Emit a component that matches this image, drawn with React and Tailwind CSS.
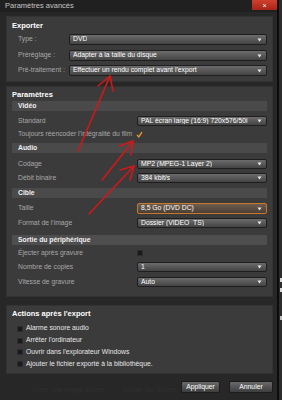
const font = { fontFamily: '"Liberation Sans", Arial, sans-serif' };

function Caret() {
  return (
    <svg width="5" height="4" viewBox="0 0 5 4" className="shrink-0">
      <path d="M0.5 0.5 L4.5 0.5 L2.5 3.5 Z" fill="#e8e8e8" />
    </svg>
  );
}

function Dropdown({ value, active }) {
  return (
    <div
      className={
        active
          ? 'flex-1 h-full flex items-center justify-between pl-[3px] pr-[4px] rounded-[2px] border border-[#c8782c] bg-gradient-to-b from-[#6e5e50] to-[#4a3e34] text-white'
          : 'flex-1 h-full flex items-center justify-between pl-[3px] pr-[4px] rounded-[2px] border border-[#1e1e1e] bg-gradient-to-b from-[#6c6c6c] to-[#444444] text-white'
      }
    >
      <span className="text-[6.8px] leading-none truncate">{value}</span>
      <Caret />
    </div>
  );
}

function Row({ label, labelWidth, className, children }) {
  return (
    <div className={`flex items-center h-[10px] pl-[11px] pr-[5px] ${className}`}>
      <span className="text-[6.8px] leading-none text-[#a8a8a8] shrink-0" style={{ width: labelWidth }}>
        {label}
      </span>
      {children}
    </div>
  );
}

function Band({ label, className }) {
  return (
    <div className={`mx-[5px] h-[10px] bg-[#4a4a4a] pl-[6px] flex items-center ${className}`}>
      <span className="text-[6.8px] leading-none font-bold text-[#f0f0f0]">{label}</span>
    </div>
  );
}

function Box() {
  return <span className="w-[6px] h-[6px] bg-[#1a1a1a] border border-[#2e2e2e] shrink-0" />;
}

function Check({ label }) {
  return (
    <div className="flex items-center h-[11.7px] pl-[10px]">
      <Box />
      <span className="ml-[3px] text-[6.8px] leading-none text-[#e6e6e6]">{label}</span>
    </div>
  );
}

export default function App() {
  return (
    <div className="relative w-[282px] h-[400px] overflow-hidden bg-[#262626] flex" style={font}>
      <div className="w-[277px] h-full flex flex-col bg-[#272727]">
        {/* title bar */}
        <div className="h-[12px] flex items-center justify-between bg-[#202020] pl-[5px]">
          <span className="text-[7.5px] leading-none text-[#c4c4c4]">Paramètres avancés</span>
          <div className="w-[25px] h-[10px] self-start flex items-center justify-center bg-gradient-to-b from-[#d0402c] to-[#a82418]">
            <span className="text-[7px] leading-none text-white">×</span>
          </div>
        </div>

        {/* Exporter */}
        <div className="mt-[4px] ml-[6px] w-[267px] h-[66px] bg-[#3b3b3b] border border-[#333] flex flex-col">
          <div className="h-[10px] mt-[4px] pl-[5px] flex items-center">
            <span className="text-[7.5px] leading-none font-bold text-white">Exporter</span>
          </div>
          <Row label="Type :" labelWidth={51} className="mt-[3px] h-[11px]">
            <Dropdown value="DVD" />
          </Row>
          <Row label="Préréglage :" labelWidth={51} className="mt-[5px] h-[11px]">
            <Dropdown value="Adapter à la taille du disque" />
          </Row>
          <Row label="Pré-traitement :" labelWidth={51} className="mt-[4px] h-[11px]">
            <Dropdown value="Effectuer un rendu complet avant l'export" />
          </Row>
        </div>

        {/* Paramètres */}
        <div className="mt-[4px] ml-[6px] w-[267px] h-[211px] bg-[#3b3b3b] border border-[#333] flex flex-col">
          <div className="h-[10px] mt-[3px] pl-[5px] flex items-center">
            <span className="text-[7.5px] leading-none font-bold text-white">Paramètres</span>
          </div>
          <Band label="Vidéo" className="mt-[1px]" />
          <Row label="Standard" labelWidth={119} className="mt-[5px]">
            <Dropdown value="PAL écran large (16:9) 720x576/50i" />
          </Row>
          <Row label="Toujours réencoder l'intégralité du film" labelWidth={119} className="mt-[3px]">
            <svg width="7" height="7" viewBox="0 0 7 7" className="-ml-[1px]">
              <path d="M1 4 L2.8 5.8 L6 1.2" stroke="#e8962e" strokeWidth="1.4" fill="none" />
            </svg>
          </Row>
          <Band label="Audio" className="mt-[4px]" />
          <Row label="Codage" labelWidth={119} className="mt-[6px]">
            <Dropdown value="MP2 (MPEG-1 Layer 2)" />
          </Row>
          <Row label="Débit binaire" labelWidth={119} className="mt-[4px]">
            <Dropdown value="384 kbit/s" />
          </Row>
          <Band label="Cible" className="mt-[5px]" />
          <Row label="Taille" labelWidth={119} className="mt-[5px] h-[11px]">
            <Dropdown value="8,5 Go (DVD DC)" active />
          </Row>
          <Row label="Format de l'image" labelWidth={119} className="mt-[4px]">
            <Dropdown value="Dossier (VIDEO_TS)" />
          </Row>
          <Band label="Sortie du périphérique" className="mt-[7px] bg-[#4e4e4e]" />
          <Row label="Éjecter après gravure" labelWidth={119} className="mt-[3px]">
            <Box />
          </Row>
          <Row label="Nombre de copies" labelWidth={119} className="mt-[4px]">
            <Dropdown value="1" />
          </Row>
          <Row label="Vitesse de gravure" labelWidth={119} className="mt-[5px]">
            <Dropdown value="Auto" />
          </Row>
        </div>

        {/* Actions après l'export */}
        <div className="mt-[8px] ml-[6px] w-[267px] h-[69px] bg-[#3b3b3b] border border-[#333] flex flex-col">
          <div className="h-[10px] mt-[3px] pl-[5px] flex items-center">
            <span className="text-[7.5px] leading-none font-bold text-white">Actions après l'export</span>
          </div>
          <div className="mt-[4px] flex flex-col">
            <Check label="Alarme sonore audio" />
            <Check label="Arrêter l'ordinateur" />
            <Check label="Ouvrir dans l'explorateur Windows" />
            <Check label="Ajouter le fichier exporté à la bibliothèque." />
          </div>
        </div>

        {/* footer */}
        <div className="relative mt-[7px] h-[12px] flex justify-end gap-[9px] pr-[4px]">
          <div className="absolute left-[32px] top-[6px] flex gap-[18px] text-[6.8px] leading-none text-[#303030]">
            <span>Créer une image disque</span>
            <span>Graver sur disque</span>
          </div>
          <div className="relative w-[39px] h-full flex items-center justify-center rounded-[2px] border border-[#1c1c1c] bg-gradient-to-b from-[#6a6a6a] to-[#3e3e3e]">
            <span className="text-[6.8px] leading-none text-white">Appliquer</span>
          </div>
          <div className="relative w-[44px] h-full flex items-center justify-center rounded-[2px] border border-[#1c1c1c] bg-gradient-to-b from-[#6a6a6a] to-[#3e3e3e]">
            <span className="text-[6.8px] leading-none text-white">Annuler</span>
          </div>
        </div>
      </div>

      {/* background app strip */}
      <div className="flex-1 h-full border-l-2 border-[#0c0c0c] bg-[#2c2c2c] flex flex-col">
        <div className="mt-[278px] ml-[1px] w-[2px] h-[4px] bg-[#d8d8d8]" />
        <div className="mt-[6px] ml-[1px] w-[2px] h-[4px] bg-[#d8d8d8]" />
        <div className="mt-[24px] ml-[1px] w-[2px] h-[4px] bg-[#bdbdbd]" />
      </div>

      {/* red annotation arrows */}
      <svg className="absolute inset-0 pointer-events-none" width="282" height="400" viewBox="0 0 282 400">
        <g stroke="#d01818" strokeWidth="1.6" fill="none" strokeLinecap="round" strokeLinejoin="round">
          <path d="M78 151 L110 76" />
          <path d="M98 86 L110 76 L113 91" />
          <path d="M102 180 L133 141" />
          <path d="M119 146 L133 141 L131 155" />
          <path d="M89 214 L134 166" />
          <path d="M120 170 L134 166 L130 180" />
        </g>
      </svg>
    </div>
  );
}
